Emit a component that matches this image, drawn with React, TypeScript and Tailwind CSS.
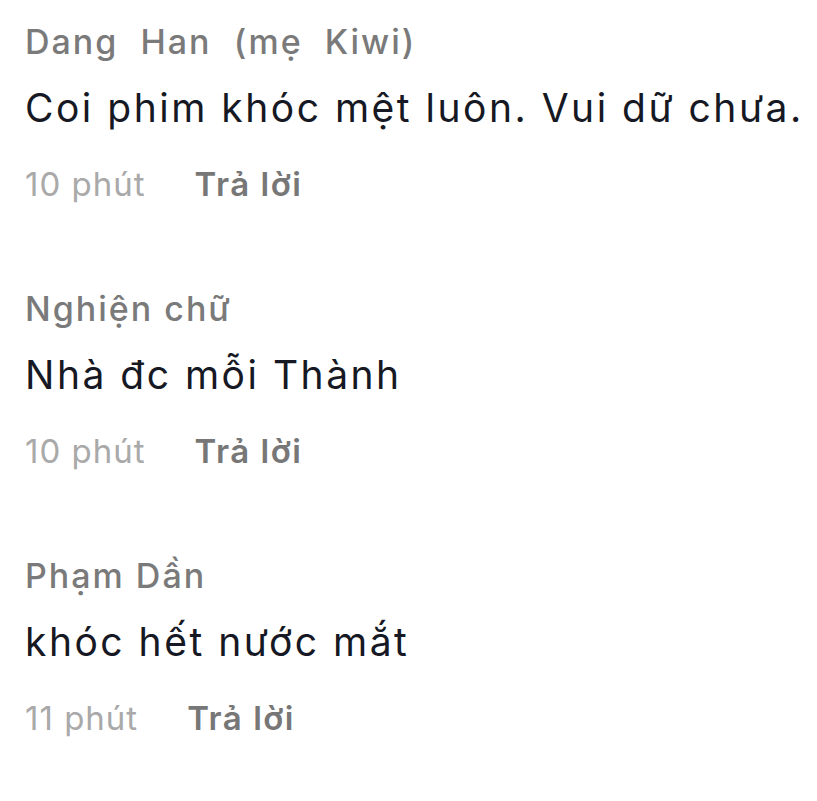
const comments = [
  { id: 1, name: "Dang  Han  (mẹ  Kiwi)", text: "Coi phim khóc mệt luôn. Vui dữ chưa.", time: "10 phút" },
  { id: 2, name: "Nghiện chữ", text: "Nhà đc mỗi Thành", time: "10 phút" },
  { id: 3, name: "Phạm Dần", text: "khóc hết nước mắt", time: "11 phút" },
];

export default function App() {
  return (
    <div className="w-[817px] h-[801px] bg-white pl-[25px] pt-[22px] font-['Inter','Liberation_Sans',sans-serif]">
      <div className="flex flex-col gap-[85px]">
        {comments.map((c) => (
          <div key={c.id} className="flex flex-col">
            <p className="text-[34px] leading-[40px] font-medium tracking-[2px] text-[#7a7a7a] whitespace-pre">{c.name}</p>
            <p className="mt-[22px] text-[39px] leading-[48px] tracking-[2.5px] text-[#161823]">{c.text}</p>
            <div className="mt-[32px] flex items-center gap-[49px] text-[33px] leading-[40px] tracking-[1px]">
              <span className="text-[#a9a9a9]">{c.time}</span>
              <span className="font-semibold tracking-[1.5px] text-[#777777]">Trả lời</span>
            </div>
          </div>
        ))}
      </div>
    </div>
  );
}
